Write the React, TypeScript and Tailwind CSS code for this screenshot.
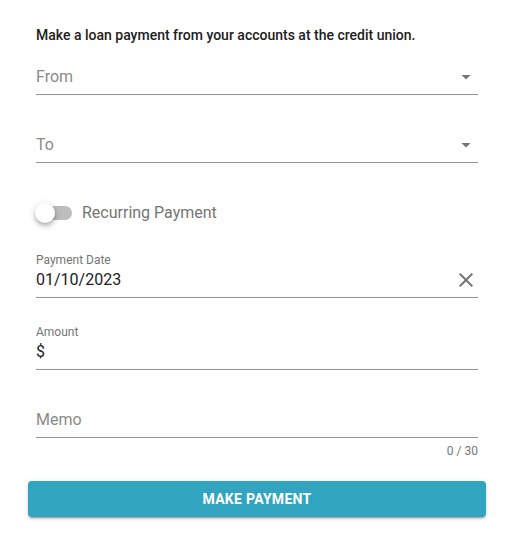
import type { ReactNode } from "react";

function Caret() {
  return (
    <svg viewBox="0 0 24 24" className="size-6 shrink-0 fill-[#757575]">
      <path d="M7.5 10l4.5 4.5 4.5-4.5z" />
    </svg>
  );
}

function Clear() {
  return (
    <svg viewBox="0 0 24 24" className="size-6 shrink-0 fill-[#757575]">
      <path d="M19 6.41L17.59 5 12 10.59 6.41 5 5 6.41 10.59 12 5 17.59 6.41 19 12 13.41 17.59 19 19 17.59 13.41 12z" />
    </svg>
  );
}

function Field({ label, value, icon, className = "" }: { label?: string; value: string; icon?: ReactNode; className?: string }) {
  return (
    <div className={className}>
      {label ? <div className="text-[12px] leading-4 text-[#757575]">{label}</div> : null}
      <div className="flex items-center border-b border-[#949494] pb-[5px]">
        <span className={`flex-1 text-[16px] leading-6 ${label ? "text-[#212121]" : "text-[#8a8a8a]"}`}>{value}</span>
        {icon}
      </div>
    </div>
  );
}

export default function App() {
  return (
    <div className="min-h-[537px] bg-white pl-[28px] pr-[34px] pt-[25px] font-['Roboto',sans-serif]">
      <div className="px-2">
        <p className="text-[14px] font-medium leading-5 text-[#212121]">Make a loan payment from your accounts at the credit union.</p>

        <Field className="mt-[20px]" value="From" icon={<Caret />} />
        <Field className="mt-[38px]" value="To" icon={<Caret />} />

        <div className="mt-[38px] flex h-6 items-center">
          <div className="relative h-6 w-[46px]">
            <div className="absolute left-0 top-[5px] h-[14px] w-[36px] rounded-full bg-[#bdbdbd]" />
            <div className="absolute left-[-1px] top-[2px] size-5 rounded-full bg-white shadow-[0_2px_4px_-1px_rgba(0,0,0,0.2),0_4px_5px_0_rgba(0,0,0,0.14),0_1px_10px_0_rgba(0,0,0,0.12)]" />
          </div>
          <span className="text-[16px] leading-6 text-[#757575]">Recurring Payment</span>
        </div>

        <Field className="mt-[27px]" label="Payment Date" value="01/10/2023" icon={<Clear />} />
        <Field className="mt-[26px]" label="Amount" value="$" />
        <Field className="mt-[38px]" value="Memo" />
        <div className="mt-[5px] text-right text-[12px] leading-4 text-[#757575]">0 / 30</div>
      </div>

      <button
        type="button"
        className="mt-[22px] h-9 w-full rounded bg-[#31a5bf] text-[14px] font-bold uppercase tracking-[0.02em] text-white shadow-[0_3px_1px_-2px_rgba(0,0,0,0.2),0_2px_2px_0_rgba(0,0,0,0.14),0_1px_5px_0_rgba(0,0,0,0.12)]"
      >
        Make Payment
      </button>
    </div>
  );
}
